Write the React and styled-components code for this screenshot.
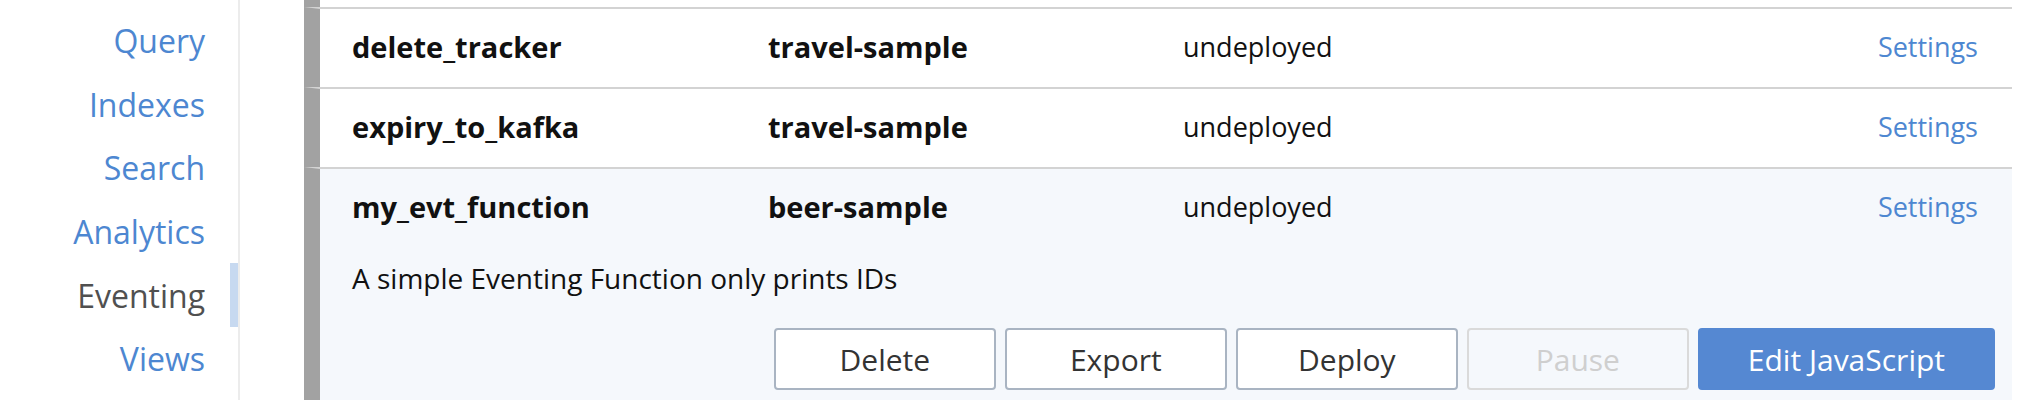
import React from "react";
import styled, { createGlobalStyle } from "styled-components";

const Global = createGlobalStyle`
  html, body { margin: 0; padding: 0; background: #ffffff; }
  body { font-family: "Open Sans", "Liberation Sans", sans-serif; overflow: hidden; }
  * { box-sizing: border-box; }
`;

const Page = styled.div`
  display: flex;
  width: 2044px;
  height: 400px;
  overflow: hidden;
`;

const Sidebar = styled.nav`
  width: 240px;
  flex: none;
  border-right: 2px solid #ececec;
  padding-top: 9px;
  display: flex;
  flex-direction: column;
`;

const NavItem = styled.a`
  display: flex;
  align-items: center;
  justify-content: flex-end;
  height: 63.6px;
  padding-right: 25px;
  border-right: 8px solid ${(p) => (p.$active ? "#c7d9f0" : "transparent")};
  font-size: 32px;
  color: ${(p) => (p.$active ? "#505050" : "#4d87d1")};
  text-decoration: none;
  white-space: nowrap;
`;

const Main = styled.main`
  margin-left: 64px;
  width: 1708px;
  flex: none;
  display: flex;
  flex-direction: column;
`;

const RowStub = styled.div`
  height: 7px;
  flex: none;
  border-left: 16px solid #a2a2a2;
  background: #ffffff;
`;

const Row = styled.div`
  border-left: 16px solid #a2a2a2;
  border-top: 2px solid #d3d3d3;
  background: ${(p) => (p.$expanded ? "#f5f8fc" : "#ffffff")};
  ${(p) => (p.$expanded ? "flex: 1 0 auto; min-height: 300px;" : "flex: none;")}
`;

const RowHeader = styled.div`
  display: grid;
  grid-template-columns: 416px 415px 1fr auto;
  align-items: center;
  height: 78px;
  padding: 0 34px 4px 32px;
  font-size: 27px;
  color: #111;
`;

const Name = styled.span`
  font-weight: 700;
  font-size: 29px;
`;

const Status = styled.span`
  font-weight: 400;
`;

const SettingsLink = styled.a`
  color: #4d87d1;
  text-decoration: none;
`;

const Description = styled.div`
  margin-top: 12px;
  padding-left: 32px;
  font-size: 28px;
  line-height: 38px;
  color: #111;
`;

const Actions = styled.div`
  display: flex;
  justify-content: flex-end;
  gap: 9px;
  margin-top: 31px;
  padding-right: 17px;
`;

const Button = styled.button`
  height: 62px;
  min-width: 222px;
  padding: 0 48px;
  font-family: "Open Sans", "Liberation Sans", sans-serif;
  font-size: 30px;
  border-radius: 4px;
  border: 2px solid ${(p) => (p.$primary ? "#5588d2" : p.disabled ? "#dadada" : "#a9b4c2")};
  background: ${(p) => (p.$primary ? "#5588d2" : p.disabled ? "transparent" : "#ffffff")};
  color: ${(p) => (p.$primary ? "#ffffff" : p.disabled ? "#cfcfcf" : "#333333")};
  cursor: ${(p) => (p.disabled ? "default" : "pointer")};
`;

const navItems = ["Query", "Indexes", "Search", "Analytics", "Eventing", "Views"];

const functions = [
  { name: "delete_tracker", bucket: "travel-sample", status: "undeployed" },
  { name: "expiry_to_kafka", bucket: "travel-sample", status: "undeployed" },
  {
    name: "my_evt_function",
    bucket: "beer-sample",
    status: "undeployed",
    description: "A simple Eventing Function only prints IDs",
    expanded: true,
  },
];

export default function App() {
  return (
    <>
      <Global />
      <Page>
        <Sidebar>
          {navItems.map((n) => (
            <NavItem key={n} href="#" $active={n === "Eventing"}>
              {n}
            </NavItem>
          ))}
        </Sidebar>
        <Main>
          <RowStub />
          {functions.map((f) => (
            <Row key={f.name} $expanded={f.expanded}>
              <RowHeader>
                <Name>{f.name}</Name>
                <Name>{f.bucket}</Name>
                <Status>{f.status}</Status>
                <SettingsLink href="#">Settings</SettingsLink>
              </RowHeader>
              {f.expanded && (
                <>
                  <Description>{f.description}</Description>
                  <Actions>
                    <Button>Delete</Button>
                    <Button>Export</Button>
                    <Button>Deploy</Button>
                    <Button disabled>Pause</Button>
                    <Button $primary>Edit JavaScript</Button>
                  </Actions>
                </>
              )}
            </Row>
          ))}
        </Main>
      </Page>
    </>
  );
}
